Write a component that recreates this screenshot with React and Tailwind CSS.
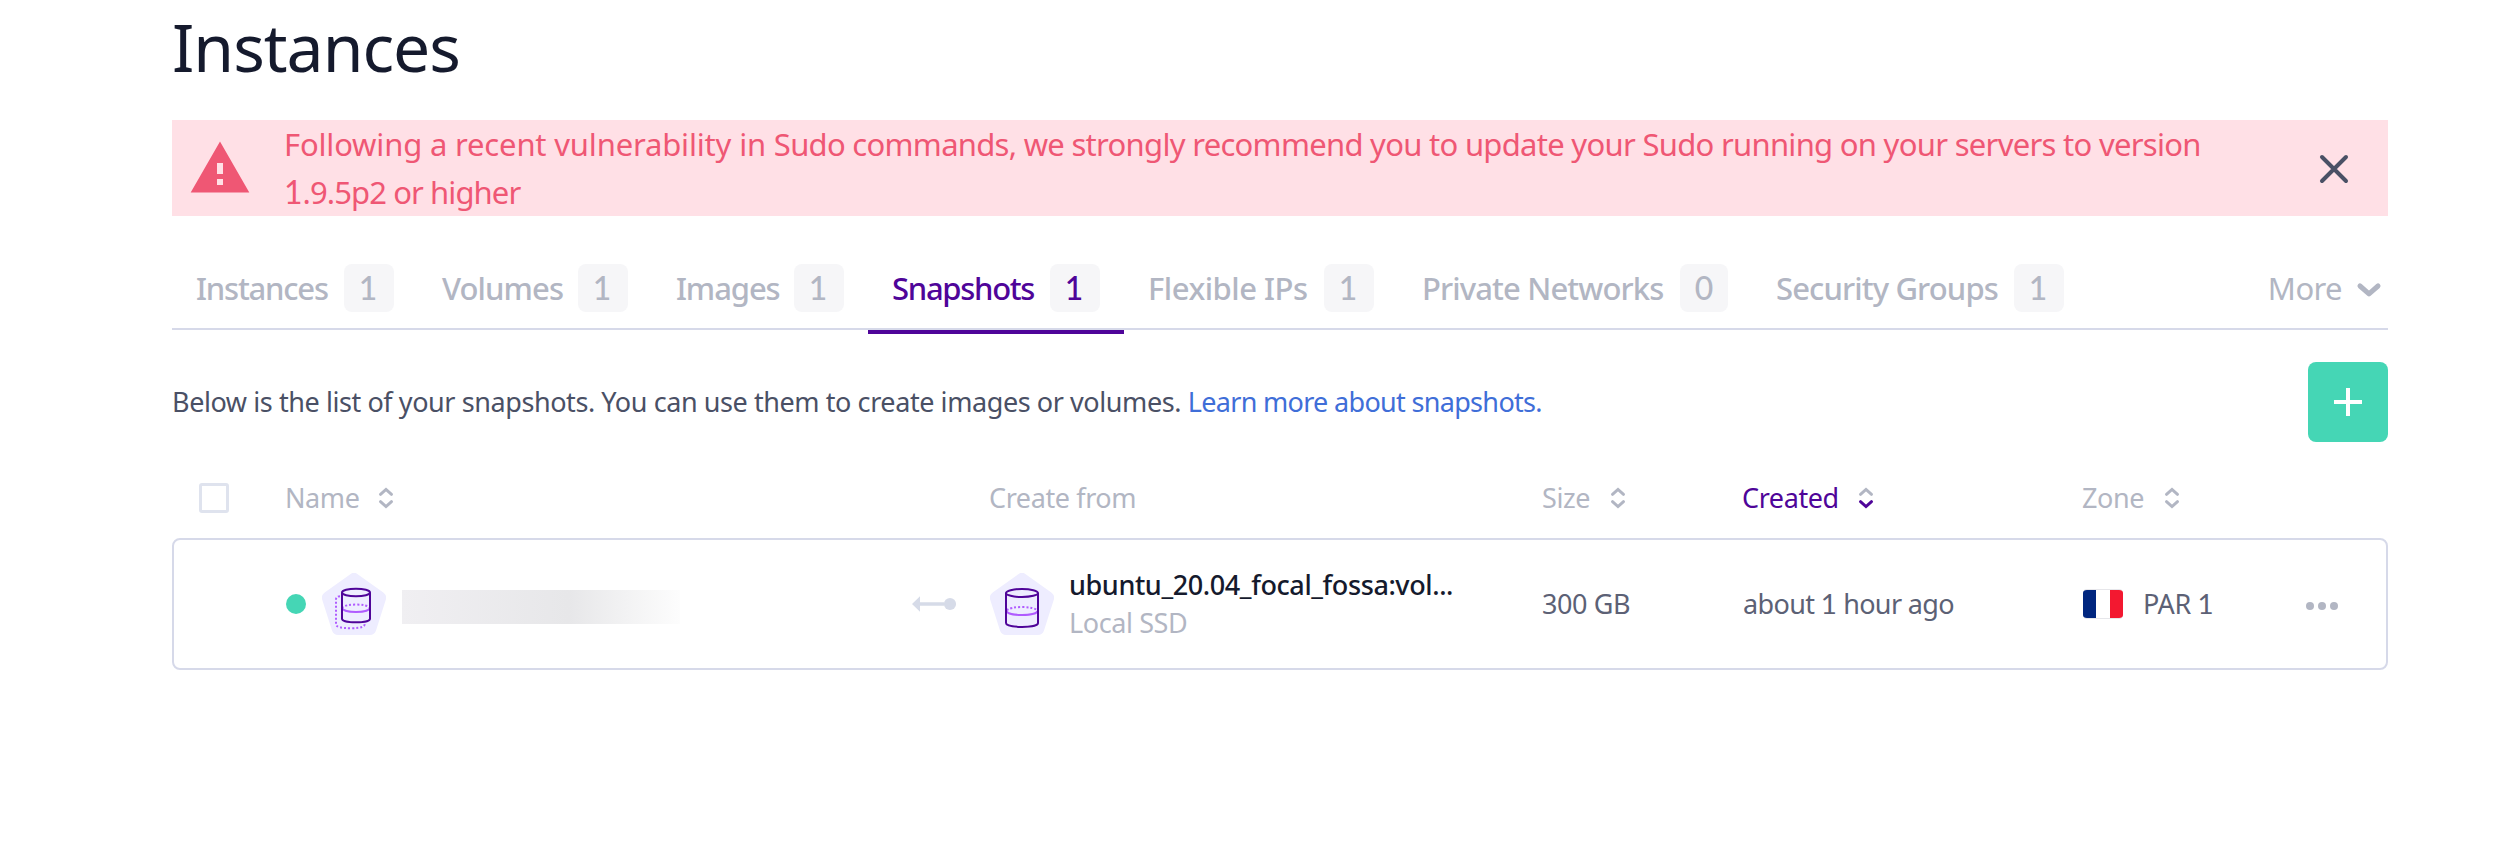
import React from "react";

const tabs = [
  { label: "Instances", count: 1, width: "w-[246px]", spacing: "tracking-[-1.2px]" },
  { label: "Volumes", count: 1, width: "w-[234px]", spacing: "tracking-[-0.9px]" },
  { label: "Images", count: 1, width: "w-[216px]", spacing: "tracking-[-1.1px]" },
  { label: "Snapshots", count: 1, width: "w-[256px]", spacing: "tracking-[-1.3px]", active: true },
  { label: "Flexible IPs", count: 1, width: "w-[274px]", spacing: "tracking-[-0.5px]" },
  { label: "Private Networks", count: 0, width: "w-[354px]", spacing: "tracking-[-0.87px]" },
  { label: "Security Groups", count: 1, width: "w-[336px]", spacing: "tracking-[-0.87px]" },
];

const Digit = ({ children }) => (
  <span className="font-['Lato',sans-serif] text-[1.03em] leading-none tracking-normal">{children}</span>
);

function Tab({ label, count, width, spacing, active }) {
  return (
    <div
      className={`${width} relative flex h-[74px] shrink-0 items-start justify-between px-6 text-[31px] font-medium ${
        active ? "text-[#4f0599]" : "text-[#b2b6c3]"
      }`}
    >
      <span className={`${spacing} whitespace-nowrap leading-[48px]`}>{label}</span>
      <span
        className={`flex h-12 items-center justify-center rounded-lg bg-[#f6f6f8] ${count ? "w-[50px] pr-0.5" : "w-12"}`}
      >
        <Digit>{count}</Digit>
      </span>
      {active && <span className="absolute inset-x-0 top-[66px] h-1 bg-[#4f0599]" />}
    </div>
  );
}

function SortIcon({ active, className }) {
  return (
    <svg className={className} width="16" height="24" viewBox="0 0 16 24" fill="none" strokeWidth="3" strokeLinecap="round">
      <path d="M2.5 8.3 8 3.4l5.5 4.9" stroke="#b2b6c3" />
      <path d="M2.5 15.7 8 20.6l5.5-4.9" stroke={active ? "#4f0599" : "#b2b6c3"} />
    </svg>
  );
}

const Pentagon = () => (
  <path
    d="M28.3 1.200a6 6 0 0 1 7.400 0l25.600 18.300a6.500 6.500 0 0 1 2.400 7.500l-9.700 30.500a6.500 6.500 0 0 1-6.200 4.500H16.200a6.500 6.500 0 0 1-6.200-4.500L.3 27a6.500 6.500 0 0 1 2.400-7.500z"
    fill="#eeedff"
  />
);

function SnapshotIcon() {
  return (
    <svg width="64" height="62" viewBox="0 0 64 62" fill="none" className="ml-4 shrink-0">
      <Pentagon />
      <path
        d="M18 23.2q-4 .3-4 3.200v25q0 3.800 15.500 3.800 14 0 13-4.400"
        stroke="#b05cff"
        strokeWidth="2"
        strokeDasharray="2 2"
      />
      <path d="M20 35c2-4.600 26-4.600 28 0" stroke="#b05cff" strokeWidth="2" strokeDasharray="2 2" />
      <path d="M20 35c1 5.300 27 5.300 28 0" stroke="#b05cff" strokeWidth="2" />
      <g stroke="#4f0599" strokeWidth="2">
        <ellipse cx="34" cy="19.5" rx="14" ry="3.8" />
        <path d="M20 19.5v26.200c0 4.800 28 4.800 28 0V19.500" />
      </g>
    </svg>
  );
}

function VolumeIcon() {
  return (
    <svg width="64" height="62" viewBox="0 0 64 62" fill="none" className="shrink-0">
      <Pentagon />
      <path d="M17 37.500c2-4.600 28-4.600 30 0" stroke="#b05cff" strokeWidth="2" strokeDasharray="2 2" />
      <path d="M16.500 38c1 5.300 30 5.300 31 0" stroke="#b05cff" strokeWidth="2" />
      <g stroke="#4f0599" strokeWidth="2">
        <ellipse cx="32" cy="20" rx="16" ry="4" />
        <path d="M16 20v30c0 5.200 32 5.200 32 0V20" />
      </g>
    </svg>
  );
}

export default function App() {
  return (
    <div className="h-[846px] w-[2516px] overflow-hidden bg-white pr-[128px] pl-[172px] font-['Noto_Sans',sans-serif]">
      <h1 className="pt-[10px] pb-[38px] text-[66px] leading-[72px] tracking-[-1px] text-[#151a2d]">Instances</h1>

      <div className="flex h-24 items-center bg-[#ffe0e6] text-[#ef5774]">
        <svg width="60" height="52" viewBox="0 0 60 52" className="mt-[-3px] ml-[18px] shrink-0">
          <path fillRule="evenodd" fill="#ef5774" d="M30 .5 59.300 51.500H.7zM27 22v11h6V22zM27 38v6h6v-6z" />
        </svg>
        <p className="ml-[34px] w-[1960px] text-[31px] leading-[48px] tracking-[-0.71px]">
          <span className="tracking-[-0.17px]">Following a recent vulnerability in </span>
          Sudo commands, we strongly recommend you to update your Sudo running on your servers to version
          <br />
          <span className="tracking-[-0.9px]">
            <Digit>1</Digit>.9.5p2 or higher
          </span>
        </p>
        <svg width="32" height="32" viewBox="0 0 32 32" className="mt-0.5 mr-[38px] ml-auto shrink-0">
          <path d="m4 4 24 24M28 4 4 28" stroke="#4a5065" strokeWidth="4" strokeLinecap="round" />
        </svg>
      </div>

      <nav className="mt-12 flex h-[66px] border-b-2 border-[#d6d9e9]">
        {tabs.map((t) => (
          <Tab key={t.label} {...t} />
        ))}
        <div className="mr-[6px] ml-auto flex h-12 items-center gap-[14px] text-[31px] text-[#b2b6c3]">
          <span className="tracking-[-0.6px]">More</span>
          <svg width="26" height="18" viewBox="0 0 26 18" fill="none" className="mt-1.5">
            <path d="m4 4 9 7.800L22 4" stroke="#b2b6c3" strokeWidth="5" strokeLinecap="round" strokeLinejoin="round" />
          </svg>
        </div>
      </nav>

      <div className="mt-8 flex h-20 items-center justify-between text-[27px] text-[#4a5065]">
        <p className="whitespace-nowrap tracking-[-0.42px]">
          Below is the list of your snapshots. You can use them to create images or volumes.{" "}
          <a className="tracking-[-0.68px] text-[#3f6ed8]">Learn more about snapshots.</a>
        </p>
        <button className="flex size-20 items-center justify-center rounded-lg bg-[#45d6b5]">
          <svg width="28" height="28" viewBox="0 0 28 28">
            <path d="M14 0v28M0 14h28" stroke="#fff" strokeWidth="4" />
          </svg>
        </button>
      </div>

      <div className="mt-9 flex h-10 items-center text-[27px] leading-10 tracking-[-0.4px] text-[#b2b6c3]">
        <span className="mr-[56px] ml-[27px] size-[30px] shrink-0 rounded-[3px] border-3 border-[#dfe3ee] bg-white" />
        <div className="grid flex-1 grid-cols-[704px_553px_200px_340px_1fr]">
          <div className="flex items-center">
            Name <SortIcon className="ml-[18px]" />
          </div>
          <div>Create from</div>
          <div className="flex items-center">
            Size <SortIcon className="ml-5" />
          </div>
          <div className="flex items-center text-[#4f0599]">
            Created <SortIcon active className="ml-[19px]" />
          </div>
          <div className="flex items-center">
            Zone <SortIcon className="ml-5" />
          </div>
        </div>
      </div>

      <div className="mt-5 flex h-[132px] items-center rounded-lg border-2 border-[#d6d9e9] pl-[112px] text-[27px] text-[#5c6175]">
        <div className="grid flex-1 grid-cols-[704px_552px_201px_340px_223px_1fr] items-center">
          <div className="flex items-center">
            <span className="size-5 rounded-full bg-[#45d6b5]" />
            <SnapshotIcon />
            <span className="mt-[6px] ml-4 h-[34px] w-[278px] bg-linear-to-r from-[#f0eff2] via-[#e7e7e9] via-60% to-[#fdfdfd]" />
            <svg width="46" height="18" viewBox="0 0 46 18" className="mr-[32px] ml-auto">
              <path d="M0 9 8 1.300v6H32v3.400H8v6z" fill="#d6dbe8" />
              <circle cx="38" cy="9" r="6.1" fill="#d6dbe8" />
            </svg>
          </div>
          <div className="flex items-center gap-[15px]">
            <VolumeIcon />
            <div className="leading-[38px]">
              <div className="w-[388px] whitespace-nowrap font-medium tracking-[-0.4px] text-[#151a2d]">
                ubuntu_20.04_focal_fossa:vol...
              </div>
              <div className="tracking-[-0.4px] text-[#b2b6c3]">Local SSD</div>
            </div>
          </div>
          <div className="tracking-[-0.4px]">300 GB</div>
          <div className="tracking-[-0.65px]">
            about <Digit>1</Digit> hour ago
          </div>
          <div className="flex items-center gap-5">
            <span className="flex h-[30px] w-10 overflow-hidden rounded border-y border-[#e6e6ea] bg-white">
              <span className="w-1/3 bg-[#00267f]" />
              <span className="w-1/3 bg-white" />
              <span className="w-1/3 bg-[#f31830]" />
            </span>
            <span className="tracking-[-0.4px]">
              PAR <Digit>1</Digit>
            </span>
          </div>
          <svg width="32" height="8" viewBox="0 0 32 8" className="mt-1" fill="#b2b6c3">
            <circle cx="4" cy="4" r="4" />
            <circle cx="16" cy="4" r="4" />
            <circle cx="28" cy="4" r="4" />
          </svg>
        </div>
      </div>
    </div>
  );
}
